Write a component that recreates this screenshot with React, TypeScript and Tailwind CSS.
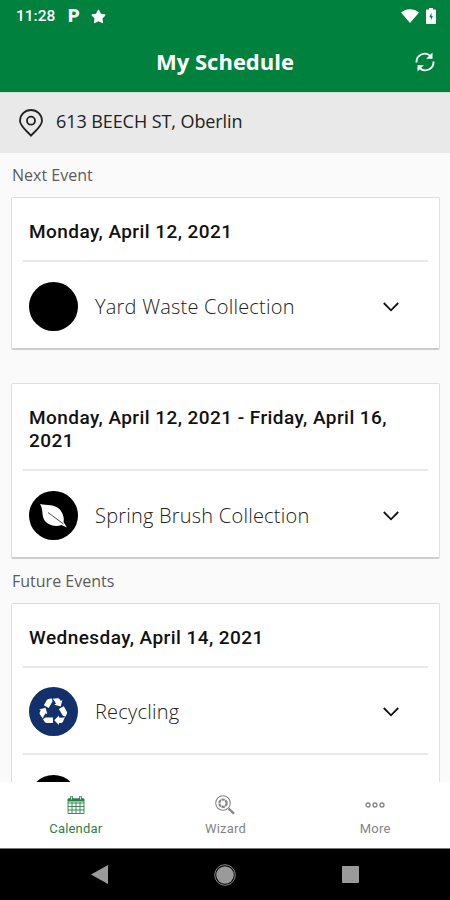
import type { FC, ReactNode } from 'react';
import { FaStar } from 'react-icons/fa';

interface ScheduleEvent {
  id: string;
  title?: string;
  color: string;
  icon?: ReactNode;
}

interface EventDay {
  date: string;
  events: ScheduleEvent[];
}

const LeafIcon: FC = () => (
  <svg viewBox="0 0 49 49" className="size-full" fill="none">
    <path d="M11 13C18 15 27 12.500 32 20 34.500 24 35.300 27.500 34.500 31L38 36.500 32.500 34C26 36.500 17.500 34 14.500 27.500 12.800 22.500 14 17.500 11 13Z" fill="#fff" />
    <path d="M19 21.500 34.500 33" stroke="#000" strokeWidth=".7" />
  </svg>
);

const RecycleArm: FC<{ transform?: string }> = ({ transform }) => (
  <g transform={transform}>
    <path d="M-9 6.500H-.6V12.700H-7Q-9 12.700-10 11L-11.500 8.500Z" />
    <path d="M.8 9.600 6 4.400V6.600L9.500 6.800 12.600 6.300 10.500 11Q9.700 12.700 8 12.700H6V14.800Z" />
  </g>
);

const RecycleIcon: FC = () => (
  <svg viewBox="-27 -27 54 54" className="size-full" fill="#fff">
    <RecycleArm />
    <RecycleArm transform="rotate(120)" />
    <RecycleArm transform="rotate(240)" />
  </svg>
);

const NEXT_EVENTS: EventDay[] = [
  { date: 'Monday, April 12, 2021', events: [{ id: 'yard', title: 'Yard Waste Collection', color: 'bg-black' }] },
  {
    date: 'Monday, April 12, 2021 - Friday, April 16, 2021',
    events: [{ id: 'brush', title: 'Spring Brush Collection', color: 'bg-black', icon: <LeafIcon /> }],
  },
];

const FUTURE_EVENTS: EventDay[] = [
  {
    date: 'Wednesday, April 14, 2021',
    events: [
      { id: 'recycling', title: 'Recycling', color: 'bg-[#13306b]', icon: <RecycleIcon /> },
      { id: 'other', color: 'bg-black' },
    ],
  },
];

const StatusBar: FC = () => (
  <div className="flex h-8 items-center justify-between pl-4 pr-[14px] text-white">
    <div className="flex items-center font-['Roboto',sans-serif]">
      <span className="mt-[2px] w-[52px] text-[15.5px] font-medium leading-none">11:28</span>
      <span className="w-[23px] text-[18px] font-black leading-none">P</span>
      <FaStar className="size-[15px]" />
    </div>
    <div className="flex items-center gap-[7px]">
      <svg viewBox="0 0 18 14" className="h-[14px] w-[18px]" fill="currentColor">
        <path d="M0 3.500C5-1 13-1 18 3.500L9 14Z" />
      </svg>
      <svg viewBox="0 0 10 16" className="h-4 w-[10px]">
        <path d="M3 0h4v1.500h2.200q.8 0 .8.800V15q0 1-.8 1H.8Q0 16 0 15V2.300q0-.8.800-.8H3Z" fill="#fff" />
        <path d="M5.500 4.500 3.300 9.200h1.500v3.300L6.900 8H5.500Z" fill="#00813e" />
      </svg>
    </div>
  </div>
);

const RefreshIcon: FC = () => (
  <svg viewBox="0 0 20 20" className="size-5" fill="none" stroke="#fff" strokeWidth="1.900">
    <path d="M1.500 10.500A8.300 8.300 0 0 1 15.500 4" />
    <path d="M18.500 9.500A8.300 8.300 0 0 1 4.500 16" />
    <path d="M17.500.5v6.300H11.200Z" fill="#fff" stroke="none" />
    <path d="M2.500 19.500v-6.300H8.800Z" fill="#fff" stroke="none" />
  </svg>
);

const PinIcon: FC = () => (
  <svg viewBox="0 0 24 28" className="h-7 w-6" fill="none" stroke="#222" strokeWidth="1.800">
    <path d="M12 26.700C8.500 22.500 1 17.500 1 11.800a11 10.800 0 0 1 22 0c0 5.700-7.500 10.700-11 14.900Z" />
    <circle cx="12" cy="11.700" r="4" />
  </svg>
);

const Chevron: FC = () => (
  <svg viewBox="0 0 16 10" className="mt-px h-[10px] w-4" fill="none" stroke="#111" strokeWidth="1.800">
    <path d="m.8 1 7.200 7.300L15.200 1" />
  </svg>
);

const EventCard: FC<{ day: EventDay }> = ({ day }) => (
  <article className="rounded-[2px] border border-b-2 border-[#dedede] border-b-[#cdcdcd] bg-white px-[11px]">
    <h2 className="px-[6px] pb-[17px] pt-[22px] font-['Roboto',sans-serif] text-[19px] font-medium leading-[23px] tracking-[0.44px] text-[#111]">
      {day.date}
    </h2>
    {day.events.map((event) => (
      <div key={event.id} className="flex h-[87px] items-center border-t-2 border-[#e9e9e9] pl-[6px] pr-[29px] pt-[2px] last:h-[88px]">
        <div className={`size-[49px] shrink-0 rounded-full ${event.color}`}>{event.icon}</div>
        <span className="ml-[17px] mt-px grow text-[20px] font-light tracking-[0.22px] text-[#222]">{event.title}</span>
        <Chevron />
      </div>
    ))}
  </article>
);

const SectionTitle: FC<{ children: ReactNode }> = ({ children }) => (
  <h3 className="h-[44px] pl-px pt-[10px] text-[16px] leading-6 text-[#5c5c5c]">{children}</h3>
);

const CalendarIcon: FC = () => (
  <svg viewBox="0 0 18 20" className="h-5 w-[18px]" fill="none" stroke="currentColor">
    <path d="M1 4h16v14.500H1ZM1 8h16M1 11.500h16M1 15h16M5 7v11.500M9 7v11.500M13 7v11.500" strokeWidth=".9" />
    <path d="M1 5h16" strokeWidth="3" />
    <path d="M4.500 1v5M13.500 1v5" strokeWidth="2.600" />
    <path d="M4.500 1.500v3M13.500 1.500v3" stroke="#fff" strokeWidth=".8" />
  </svg>
);

const WizardIcon: FC = () => (
  <svg viewBox="0 0 20 20" className="size-5" fill="none" stroke="currentColor">
    <circle cx="8" cy="8" r="7.300" strokeWidth="1.100" />
    <path d="m13.600 13.600 5.400 5" strokeWidth="2.200" />
    <circle cx="8" cy="8.200" r="3.700" strokeWidth="2.200" strokeDasharray="3.300 .575" />
  </svg>
);

const MoreIcon: FC = () => (
  <svg viewBox="0 0 20 20" className="size-5" fill="none" stroke="currentColor" strokeWidth="1.300">
    <circle cx="3" cy="10" r="2" />
    <circle cx="10" cy="10" r="2" />
    <circle cx="17" cy="10" r="2" />
  </svg>
);

const TABS = [
  { label: 'Calendar', icon: <CalendarIcon />, color: 'text-[#27824a]' },
  { label: 'Wizard', icon: <WizardIcon />, color: 'text-[#858585]' },
  { label: 'More', icon: <MoreIcon />, color: 'text-[#858585]' },
];

const App: FC = () => (
  <div className="flex h-[900px] w-[450px] flex-col overflow-hidden bg-[#fafafa] font-['Open_Sans',sans-serif]">
    <header className="h-[92px] shrink-0 bg-[#00813e]">
      <StatusBar />
      <div className="grid h-[60px] grid-cols-[1fr_auto_1fr] items-center">
        <h1 className="col-start-2 -mt-0.5 text-[22px] font-bold text-white">My Schedule</h1>
        <button className="mr-[15px] justify-self-end" aria-label="Refresh">
          <RefreshIcon />
        </button>
      </div>
    </header>

    <div className="flex h-[61px] shrink-0 items-center gap-[13px] border-t border-[#d5dcd7] bg-[#e9e9e9] pl-[19px]">
      <PinIcon />
      <span className="-mt-1 text-[18px] tracking-[-0.08px] text-[#222]">613 BEECH ST, Oberlin</span>
    </div>

    <main className="min-h-0 grow overflow-hidden pl-[11px] pr-[10px]">
      <SectionTitle>Next Event</SectionTitle>
      <div className="flex flex-col gap-[33px]">
        {NEXT_EVENTS.map((day) => (
          <EventCard key={day.date} day={day} />
        ))}
      </div>
      <SectionTitle>Future Events</SectionTitle>
      {FUTURE_EVENTS.map((day) => (
        <EventCard key={day.date} day={day} />
      ))}
    </main>

    <nav className="grid h-[66px] shrink-0 grid-cols-3 bg-white pl-px">
      {TABS.map((tab) => (
        <div key={tab.label} className={`flex flex-col items-center pt-[13px] ${tab.color}`}>
          {tab.icon}
          <span className="mt-[5px] font-['Roboto',sans-serif] text-[13px] leading-[18px] tracking-[0.2px]">{tab.label}</span>
        </div>
      ))}
    </nav>

    <div className="flex h-[52px] shrink-0 items-center justify-between border-t border-[#777] bg-black px-[91px]">
      <svg viewBox="0 0 17 19" className="h-[19px] w-[17px]" fill="#9a9a9a">
        <path d="M0 9.500 17 0v19Z" />
      </svg>
      <svg viewBox="0 0 22 22" className="size-[22px]">
        <circle cx="11" cy="11" r="10.300" fill="none" stroke="#888" />
        <circle cx="11" cy="11" r="8.800" fill="#9a9a9a" />
      </svg>
      <div className="size-[17px] rounded-[1px] bg-[#9a9a9a]" />
    </div>
  </div>
);

export default App;
